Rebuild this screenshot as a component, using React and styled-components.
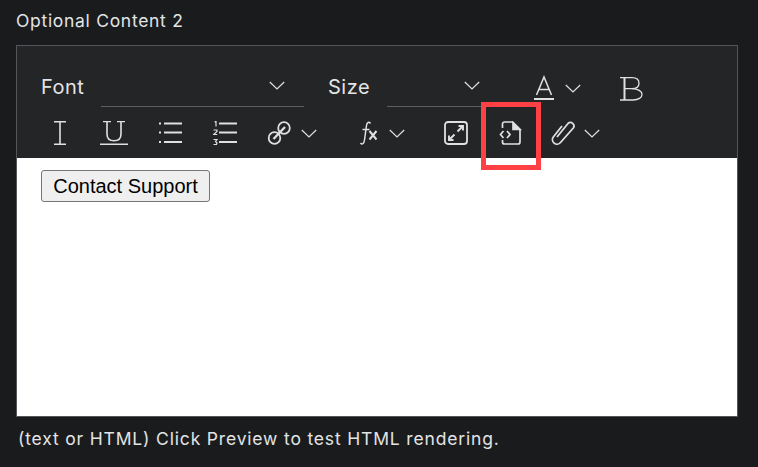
import React from "react";
import styled, { createGlobalStyle } from "styled-components";

const Global = createGlobalStyle`
    html, body {
        margin: 0;
        padding: 0;
        background: #1a1b1d;
    }
    * {
        box-sizing: border-box;
    }
`;

const Page = styled.main`
    width: 758px;
    height: 467px;
    padding: 11px 20px 0 16px;
    background: #1a1b1d;
    font-family: Inter, "Liberation Sans", sans-serif;
    overflow: hidden;
`;

const Label = styled.div`
    height: 34px;
    color: #e2e4e6;
    font-size: 17.5px;
    line-height: 20px;
    letter-spacing: 0.7px;
`;

const Editor = styled.section`
    position: relative;
    width: 722px;
    height: 372px;
    border: 1px solid #53565a;
    display: flex;
    flex-direction: column;
`;

const Toolbar = styled.div`
    height: 112px;
    flex: none;
    background: #242527;
    color: #e4e4e4;
    padding-top: 21px;
`;

const Row = styled.div`
    display: flex;
    align-items: center;
    height: ${p => p.$h}px;
    margin-top: ${p => p.$top || 0}px;
    padding-left: ${p => p.$pad}px;
`;

const SelectName = styled.span`
    width: ${p => p.$w}px;
    color: #e4e4e4;
    font-size: 20px;
    line-height: 40px;
    letter-spacing: 0.5px;
    flex: none;
`;

const SelectField = styled.div`
    width: ${p => p.$w}px;
    height: 40px;
    margin-right: ${p => p.$gap}px;
    border-bottom: 1px solid #5d5f62;
    display: flex;
    justify-content: flex-end;
    align-items: flex-start;
    padding: 14px ${p => p.$inset}px 0 0;
    flex: none;
`;

const Tool = styled.span`
    width: ${p => p.$w}px;
    height: 32px;
    margin-left: ${p => p.$ml || 0}px;
    padding-top: ${p => p.$pt || 0}px;
    flex: none;
    display: flex;
    align-items: center;
    justify-content: center;
`;

const Highlight = styled.div`
    position: absolute;
    left: 464px;
    top: 56px;
    width: 60px;
    height: 68px;
    border: 5px solid #ff4146;
    pointer-events: none;
`;

const Content = styled.div`
    flex: 1;
    background: #fff;
    padding: 12px 24px;
`;

const SupportButton = styled.button`
    display: block;
    width: 169px;
    height: 32px;
    padding: 0;
    background: #efefef;
    color: #000;
    border: 1px solid #767676;
    border-radius: 3px;
    font-family: "Liberation Sans", Arial, sans-serif;
    font-size: 20px;
    line-height: 28px;
`;

const Hint = styled.p`
    margin: 12px 0 0 2px;
    color: #e2e4e6;
    font-size: 17.5px;
    line-height: 20px;
    letter-spacing: 0.83px;
`;

const Svg = styled.svg`
    flex: none;
    display: block;
`;

const Icon = ({ w = 24, h = 24, children, sw = 1.6 }) => (
    <Svg width={w} height={h} viewBox={`0 0 ${w} ${h}`} fill="none" stroke="#e0e0e0" strokeWidth={sw}>
        {children}
    </Svg>
);

const Chevron = () => (
    <Icon w={16} h={9} sw={1.2}>
        <path d="M.8 1 8 8l7.2-7" />
    </Icon>
);

const ColorA = () => (
    <Icon w={20} h={28} sw={1.5}>
        <path d="M2.5 22 10 4l7.5 18M5 16.500h10" />
        <path d="M0 26h20" strokeWidth="2" />
    </Icon>
);

const Bold = () => (
    <Icon w={24} h={28} sw={1.3}>
        <path d="M1 4.700h12c4.500 0 7 2.300 7 5.500s-2.500 5.500-7 5.500H6" />
        <path d="M13 15.700c6 0 10 2.500 10 5.700s-3.500 5.600-9 5.600H1" />
        <path d="M5.500 4.700V27" strokeWidth="2" />
    </Icon>
);

const Italic = () => (
    <Icon>
        <path d="M6 .8h12M6 23.200h12M12 .8v22.400" />
    </Icon>
);

const Underline = () => (
    <Icon w={28} h={24}>
        <path d="M7 0v13c0 4.500 2.500 6.800 7 6.800s7-2.300 7-6.800V0M3 .5h8M17 .5h8" />
        <path d="M0 23.500h28" strokeWidth="2" />
    </Icon>
);

const BulletList = () => (
    <Icon>
        <path d="M5 2.500h18M5 11.500h18M5 21h18" strokeWidth="1.800" />
        <path d="M0 2.500h2M0 11.500h2M0 21h2" strokeWidth="1.800" />
    </Icon>
);

const NumberList = () => (
    <Icon>
        <path d="M6 2.500h18M6 11.500h18M6 21h18" strokeWidth="1.800" />
        <path d="M1.500 1 3 .5v5M.5 9h3.500v1.500L.5 13.500h3.800M.5 18.500h3.500l-1.500 2 1.500 1.500-.5 1.500H.5" strokeWidth="1.200" />
    </Icon>
);

const LinkIcon = () => (
    <Icon sw={1.8}>
        <circle cx="17" cy="7" r="5.800" />
        <circle cx="7.500" cy="17" r="5.800" />
        <path d="M6.500 18 18 6" strokeWidth="2.400" />
    </Icon>
);

const FxIcon = () => (
    <Icon sw={1.5}>
        <path d="M12.500 2.500C11 .5 9 1 8.500 4.500L6.500 19C6 23 4 24 2.500 22M4.500 8.500h7" />
        <path d="M11.500 10l7 8.500M18.500 10l-7 8.500" strokeWidth="2" />
    </Icon>
);

const Expand = () => (
    <Icon sw={1.8}>
        <rect x="1" y="1" width="22" height="22" rx="3" />
        <path d="M13.500 10.500 19 5M14.500 5H19v4.500M10.500 13.500 5 19M9.500 19H5v-4.500" strokeWidth="1.900" />
    </Icon>
);

const SourceFile = () => (
    <Icon sw={1.7}>
        <path d="M3.500 7V3a2 2 0 0 1 2-2h8l7.500 7.500V21a2 2 0 0 1-2 2H5.500a2 2 0 0 1-2-2v-2" />
        <path d="M14 1.500v7h7z" fill="#e0e0e0" />
        <path d="M4.500 10 1.500 13.500l3 3.500M8 10l3 3.500L8 17" />
    </Icon>
);

const Clip = () => (
    <Icon w={26} h={26} sw={1.8}>
        <path d="M7 17 18 3.500a3.500 3.500 0 0 1 5.300 4.500L10.500 22.500a4.500 4.500 0 0 1-7-5.800L12 6" />
    </Icon>
);

function App() {
    return (
        <Page>
            <Global />
            <Label>Optional Content 2</Label>
            <Editor>
                <Toolbar>
                    <Row $h={40} $pad={24}>
                        <SelectName $w={60}>Font</SelectName>
                        <SelectField $w={203} $gap={24} $inset={19}>
                            <Chevron />
                        </SelectField>
                        <SelectName $w={59}>Size</SelectName>
                        <SelectField $w={103} $gap={44} $inset={10}>
                            <Chevron />
                        </SelectField>
                        <ColorA />
                        <Tool $w={38} $pt={2}>
                            <Chevron />
                        </Tool>
                        <Tool $w={78}>
                            <Bold />
                        </Tool>
                    </Row>
                    <Row $h={50} $top={1} $pad={31}>
                        <Tool $w={24}><Italic /></Tool>
                        <Tool $w={24} $ml={30}><Underline /></Tool>
                        <Tool $w={24} $ml={33}><BulletList /></Tool>
                        <Tool $w={24} $ml={30}><NumberList /></Tool>
                        <Tool $w={24} $ml={30}><LinkIcon /></Tool>
                        <Tool $w={16} $ml={10}><Chevron /></Tool>
                        <Tool $w={24} $ml={41}><FxIcon /></Tool>
                        <Tool $w={16} $ml={7}><Chevron /></Tool>
                        <Tool $w={24} $ml={39}><Expand /></Tool>
                        <Tool $w={24} $ml={31}><SourceFile /></Tool>
                        <Tool $w={24} $ml={28}><Clip /></Tool>
                        <Tool $w={16} $ml={9}><Chevron /></Tool>
                    </Row>
                </Toolbar>
                <Content>
                    <SupportButton>Contact Support</SupportButton>
                </Content>
                <Highlight />
            </Editor>
            <Hint>(text or HTML) Click Preview to test HTML rendering.</Hint>
        </Page>
    );
}

export default App;
